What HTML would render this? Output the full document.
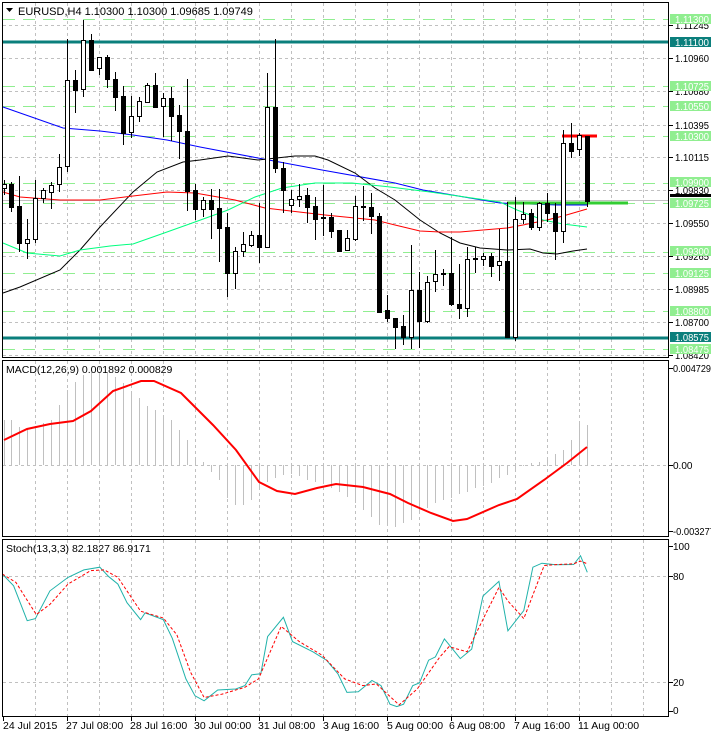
<!DOCTYPE html>
<html><head><meta charset="utf-8"><style>
html,body{margin:0;padding:0;background:#fff;}
svg{display:block;font-family:"Liberation Sans",sans-serif;}
</style></head><body>
<svg width="711" height="733" viewBox="0 0 711 733" xmlns="http://www.w3.org/2000/svg">
<rect width="711" height="733" fill="#fff"/>
<g stroke="#c0c0c0" stroke-width="1" stroke-dasharray="3,3">
<path d="M35.5 3V357M67.5 3V357M99.5 3V357M131.5 3V357M163.5 3V357M195.5 3V357M227.5 3V357M259.5 3V357M291.5 3V357M323.5 3V357M355.5 3V357M387.5 3V357M419.5 3V357M451.5 3V357M483.5 3V357M515.5 3V357M547.5 3V357M579.5 3V357M611.5 3V357M643.5 3V357"/>
<path d="M35.5 361V536M67.5 361V536M99.5 361V536M131.5 361V536M163.5 361V536M195.5 361V536M227.5 361V536M259.5 361V536M291.5 361V536M323.5 361V536M355.5 361V536M387.5 361V536M419.5 361V536M451.5 361V536M483.5 361V536M515.5 361V536M547.5 361V536M579.5 361V536M611.5 361V536M643.5 361V536"/>
<path d="M35.5 540V716M67.5 540V716M99.5 540V716M131.5 540V716M163.5 540V716M195.5 540V716M227.5 540V716M259.5 540V716M291.5 540V716M323.5 540V716M355.5 540V716M387.5 540V716M419.5 540V716M451.5 540V716M483.5 540V716M515.5 540V716M547.5 540V716M579.5 540V716M611.5 540V716M643.5 540V716"/>
<path d="M3 25.5H668M3 58.5H668M3 91.5H668M3 125.5H668M3 157.5H668M3 190.5H668M3 223.5H668M3 256.5H668M3 289.5H668M3 322.5H668M3 355.5H668"/>
<path d="M3 465.5H668M3 576.5H668M3 682.5H668"/>
</g>
<g stroke="#90ee90" stroke-width="1" stroke-dasharray="12,8">
<path d="M3 19.5H668M3 86.5H668M3 106.5H668M3 136.5H668M3 183.5H668M3 203.5H668M3 252.5H668M3 273.5H668M3 311.5H668M3 349.5H668"/>
</g>
<line x1="3" y1="200.5" x2="668" y2="200.5" stroke="#c0c0c0"/>
<g stroke="#0b7f7c" stroke-width="3"><line x1="3" y1="42" x2="668" y2="42"/><line x1="3" y1="338" x2="668" y2="338"/></g>
<g fill="none" stroke-width="1">
<polyline stroke="#0000ff" points="3,107 63,128 100,131 133,135 167,140 200,147 258,158 322,170 395,183 423,190 470,198 500,203 557,205 587,205"/>
<polyline stroke="#000" points="3,293 20,287 60,270 80,250 100,227 133,192 157,172 183,162 200,160 228,156 258,160 295,156 315,156 328,160 355,173 375,188 395,200 420,220 440,233 460,243 480,248 507,250 530,249 543,253 557,254 573,251 587,249"/>
<polyline stroke="#ff0000" points="3,192 20,197 60,200 100,200 133,196 167,192 195,193 235,200 265,208 325,215 375,220 395,225 420,231 440,232 460,232 483,230 507,228 523,225 547,220 563,216 587,209"/>
<polyline stroke="#00ff7f" points="3,243 27,253 60,256 80,250 110,246 133,244 167,232 195,222 228,210 255,197 282,188 315,183 352,183 390,187 430,192 500,202 517,210 543,220 563,224 587,227"/>
</g>
<line x1="562" y1="136" x2="597" y2="136" stroke="#ff0000" stroke-width="3"/>
<line x1="507" y1="203" x2="628" y2="203" stroke="#32cd32" stroke-width="3"/>
<g stroke="#000" stroke-width="1">
<path d="M4.5 180V195M11.5 182V212M19.5 176V252M27.5 219V259M35.5 180V243M43.5 188V203M51.5 182V209M59.5 154V192M67.5 39V172M75.5 70V113M83.5 20V97M91.5 34V71M99.5 57V75M107.5 55V88M115.5 72V111M123.5 86V145M131.5 96V138M139.5 97V122M147.5 83V103M155.5 73V107M163.5 93V137M171.5 87V141M179.5 105V159M187.5 79V211M195.5 184V220M203.5 197V217M211.5 189V239M219.5 189V262M227.5 213V297M235.5 247V289M243.5 232V257M251.5 231V247M259.5 203V263M267.5 73V247M275.5 39V173M283.5 162V213M291.5 190V213M299.5 184V207M307.5 188V223M315.5 197V240M323.5 185V236M331.5 213V238M339.5 230V251M347.5 230V250M355.5 196V241M363.5 186V221M371.5 193V234M379.5 213V313M387.5 295V322M395.5 318V349M403.5 315V345M411.5 245V349M419.5 272V348M427.5 276V323M435.5 250V292M443.5 269V286M451.5 237V306M459.5 264V319M467.5 247V317M475.5 247V273M483.5 253V266M491.5 253V277M499.5 229V281M507.5 202V337M515.5 197V341M523.5 202V224M531.5 209V230M539.5 202V231M547.5 193V222M555.5 203V260M563.5 130V243M571.5 123V158M579.5 133V156M587.5 136V207"/>
<g fill="#fff">
<rect x="2.5" y="184.5" width="4" height="4"/><rect x="25.5" y="239.5" width="4" height="4"/><rect x="33.5" y="198.5" width="4" height="41"/><rect x="41.5" y="190.5" width="4" height="8"/><rect x="49.5" y="185.5" width="4" height="7"/><rect x="57.5" y="167.5" width="4" height="17"/><rect x="65.5" y="80.5" width="4" height="86"/><rect x="81.5" y="40.5" width="4" height="49"/><rect x="97.5" y="57.5" width="4" height="11"/><rect x="129.5" y="116.5" width="4" height="16"/><rect x="137.5" y="101.5" width="4" height="15"/><rect x="145.5" y="85.5" width="4" height="17"/><rect x="161.5" y="98.5" width="4" height="8"/><rect x="201.5" y="200.5" width="4" height="9"/><rect x="233.5" y="251.5" width="4" height="22"/><rect x="241.5" y="244.5" width="4" height="7"/><rect x="249.5" y="235.5" width="4" height="10"/><rect x="265.5" y="107.5" width="4" height="140"/><rect x="289.5" y="199.5" width="4" height="6"/><rect x="297.5" y="196.5" width="4" height="3"/><rect x="345.5" y="238.5" width="4" height="12"/><rect x="353.5" y="206.5" width="4" height="33"/><rect x="409.5" y="290.5" width="4" height="47"/><rect x="425.5" y="282.5" width="4" height="39"/><rect x="433.5" y="274.5" width="4" height="7"/><rect x="465.5" y="259.5" width="4" height="49"/><rect x="481.5" y="256.5" width="4" height="3"/><rect x="497.5" y="261.5" width="4" height="4"/><rect x="513.5" y="219.5" width="4" height="118"/><rect x="521.5" y="214.5" width="4" height="5"/><rect x="537.5" y="203.5" width="4" height="24"/><rect x="561.5" y="143.5" width="4" height="88"/><rect x="577.5" y="135.5" width="4" height="14"/>
</g>
<g fill="#000">
<rect x="9.5" y="184.5" width="4" height="23"/><rect x="17.5" y="206.5" width="4" height="37"/><rect x="73.5" y="80.5" width="4" height="10"/><rect x="89.5" y="40.5" width="4" height="30"/><rect x="105.5" y="57.5" width="4" height="22"/><rect x="113.5" y="79.5" width="4" height="18"/><rect x="121.5" y="96.5" width="4" height="37"/><rect x="153.5" y="85.5" width="4" height="22"/><rect x="169.5" y="98.5" width="4" height="18"/><rect x="177.5" y="115.5" width="4" height="16"/><rect x="185.5" y="131.5" width="4" height="60"/><rect x="193.5" y="190.5" width="4" height="19"/><rect x="209.5" y="200.5" width="4" height="9"/><rect x="217.5" y="208.5" width="4" height="20"/><rect x="225.5" y="227.5" width="4" height="46"/><rect x="257.5" y="235.5" width="4" height="12"/><rect x="273.5" y="107.5" width="4" height="61"/><rect x="281.5" y="168.5" width="4" height="22"/><rect x="305.5" y="195.5" width="4" height="12"/><rect x="313.5" y="206.5" width="4" height="13"/><rect x="321.5" y="217.5" width="4" height="1"/><rect x="329.5" y="217.5" width="4" height="14"/><rect x="337.5" y="230.5" width="4" height="21"/><rect x="361.5" y="206.5" width="4" height="1"/><rect x="369.5" y="207.5" width="4" height="9"/><rect x="377.5" y="216.5" width="4" height="96"/><rect x="385.5" y="310.5" width="4" height="8"/><rect x="393.5" y="318.5" width="4" height="9"/><rect x="401.5" y="326.5" width="4" height="11"/><rect x="417.5" y="290.5" width="4" height="31"/><rect x="441.5" y="273.5" width="4" height="1"/><rect x="449.5" y="273.5" width="4" height="31"/><rect x="457.5" y="304.5" width="4" height="4"/><rect x="473.5" y="258.5" width="4" height="1"/><rect x="489.5" y="256.5" width="4" height="10"/><rect x="505.5" y="261.5" width="4" height="76"/><rect x="529.5" y="213.5" width="4" height="14"/><rect x="545.5" y="203.5" width="4" height="10"/><rect x="553.5" y="213.5" width="4" height="18"/><rect x="569.5" y="143.5" width="4" height="8"/><rect x="585.5" y="136.5" width="4" height="65"/>
</g>
</g>
<path stroke="#c0c0c0" stroke-width="1" fill="none" d="M4.5 465V420M11.5 465V420M19.5 465V427M27.5 465V428M35.5 465V426M43.5 465V423M51.5 465V420M59.5 465V405M67.5 465V390M75.5 465V382M83.5 465V375M91.5 465V372M99.5 465V372M107.5 465V373M115.5 465V377M123.5 465V383M131.5 465V392M139.5 465V398M147.5 465V406M155.5 465V410M163.5 465V415M171.5 465V420M179.5 465V430M187.5 465V440M195.5 465V457M203.5 465V462M211.5 465V472M219.5 465V480M227.5 465V498M235.5 465V505M243.5 465V505M251.5 465V500M259.5 465V490M267.5 465V482M275.5 465V478M283.5 465V475M291.5 465V474M299.5 465V476M307.5 465V480M315.5 465V482M323.5 465V484M331.5 465V488M339.5 465V492M347.5 465V497M355.5 465V503M363.5 465V510M371.5 465V517M379.5 465V525M387.5 465V525M395.5 465V527M403.5 465V523M411.5 465V520M419.5 465V513M427.5 465V508M435.5 465V503M443.5 465V500M451.5 465V498M459.5 465V494M467.5 465V492M475.5 465V488M483.5 465V486M491.5 465V483M499.5 465V478M507.5 465V475M515.5 465V470M523.5 465V466M531.5 465V463M539.5 465V462M547.5 465V458M555.5 465V454M563.5 465V450M571.5 465V440M579.5 465V424M587.5 465V425"/>
<polyline fill="none" stroke="#ff0000" stroke-width="2" points="4,440 27,429 50,424 73,421 91,411 113,391 141,381 154,381 181,393 213,425 236,450 259,482 277,491 295,494 317,488 336,484 363,487 390,494 408,503 431,513 453,521 467,519 499,505 517,499 544,480 567,463 587,447"/>
<polyline fill="none" stroke="#20b2aa" stroke-width="1" points="2.3,574 13.6,585.8 27.2,620.7 35.4,618.6 49.9,590.9 68,577.4 83.9,569.9 99.8,567.2 108.8,576.7 117.9,584.1 127,602.7 140.6,619.6 145.1,612.9 163.3,619.6 172.3,638.3 185.9,678.9 195,695.8 204.1,700.8 217.7,690 235.8,689 244.9,685.6 251.7,674.8 260.8,673.8 267.6,636.6 283.4,617.3 292.5,641.6 312.9,651.8 326.5,660.2 337.9,673.8 346.9,692.4 358.3,691.7 371.9,680.5 381,685.6 390,704.2 396.8,706.6 403.6,704.2 412.7,685.6 419.5,682.9 428.6,660.2 435.4,656.9 444.4,638.9 460.3,658.6 471.7,649.1 483,596 498.9,581.4 507.9,630.8 523.8,610.5 532.9,567.2 541.9,563.2 555.6,564.8 573.7,564.5 580.5,555.7 587.3,572.3"/>
<polyline fill="none" stroke="#ff0000" stroke-width="1" stroke-dasharray="3,2" points="2.3,574 15.9,582.4 36.3,614.6 49.9,604.4 68,584.1 90.7,570.6 104.3,569.9 117.9,577.4 140.6,611.2 163.3,618 176.9,634.9 190.5,672.1 204.1,697.5 222.2,694.1 244.9,687.3 258.5,678.9 281.2,626.4 299.3,641.6 322,655.2 344.7,678.9 362.8,685.6 376.4,683.9 399.1,704.9 417.2,689 439.9,656.9 449,646.7 467.1,651.8 485.3,614.6 498.9,587.5 507.9,601 523.8,618.6 544.2,565.5 557.8,564.5 573.7,563.8 580.5,561.1 587.3,563.8"/>
<g fill="none" stroke="#000" stroke-width="1">
<rect x="2.5" y="2.5" width="666" height="355"/>
<rect x="2.5" y="360.5" width="666" height="176"/>
<rect x="2.5" y="539.5" width="666" height="177"/>
</g>
<path stroke="#000" d="M669 25.5h4M669 58.5h4M669 91.5h4M669 125.5h4M669 157.5h4M669 190.5h4M669 223.5h4M669 256.5h4M669 289.5h4M669 322.5h4M669 355.5h4M669 368.5h4M669 465.5h4M669 531.5h4M669 546.5h4M669 576.5h4M669 682.5h4M669 711.5h4M3.5 717v4M67.5 717v4M131.5 717v4M195.5 717v4M259.5 717v4M323.5 717v4M387.5 717v4M451.5 717v4M515.5 717v4M579.5 717v4"/>
<g font-size="10" fill="#000" lengthAdjust="spacingAndGlyphs">
<text x="675" y="29" textLength="34" lengthAdjust="spacingAndGlyphs">1.11245</text><text x="675" y="62" textLength="34" lengthAdjust="spacingAndGlyphs">1.10960</text><text x="675" y="95" textLength="34" lengthAdjust="spacingAndGlyphs">1.10680</text><text x="675" y="129" textLength="34" lengthAdjust="spacingAndGlyphs">1.10395</text><text x="675" y="161" textLength="34" lengthAdjust="spacingAndGlyphs">1.10115</text><text x="675" y="194" textLength="34" lengthAdjust="spacingAndGlyphs">1.09830</text><text x="675" y="227" textLength="34" lengthAdjust="spacingAndGlyphs">1.09550</text><text x="675" y="260" textLength="34" lengthAdjust="spacingAndGlyphs">1.09265</text><text x="675" y="293" textLength="34" lengthAdjust="spacingAndGlyphs">1.08985</text><text x="675" y="326" textLength="34" lengthAdjust="spacingAndGlyphs">1.08700</text><text x="675" y="359" textLength="34" lengthAdjust="spacingAndGlyphs">1.08420</text>
<text x="673" y="372" textLength="38" lengthAdjust="spacingAndGlyphs">0.004729</text><text x="673" y="469">0.00</text><text x="673" y="535" textLength="42" lengthAdjust="spacingAndGlyphs">-0.003277</text>
<text x="673" y="550">100</text><text x="673" y="580">80</text><text x="673" y="686">20</text><text x="673" y="714">0</text>
</g>
<rect x="670" y="194" width="41" height="3" fill="#000"/>
<g fill="#90ee90">
<rect x="670" y="14" width="41" height="10"/><rect x="670" y="81" width="41" height="10"/><rect x="670" y="101" width="41" height="10"/><rect x="670" y="131" width="41" height="10"/><rect x="670" y="177" width="41" height="10"/><rect x="670" y="198" width="41" height="10"/><rect x="670" y="246" width="41" height="10"/><rect x="670" y="268" width="41" height="10"/><rect x="670" y="306" width="41" height="10"/><rect x="670" y="344" width="41" height="10"/>
</g>
<g fill="#0b7f7c"><rect x="670" y="37" width="41" height="10"/><rect x="670" y="332" width="41" height="10"/></g>
<g font-size="10" fill="#fff">
<text x="675" y="23" textLength="34" lengthAdjust="spacingAndGlyphs">1.11300</text><text x="675" y="46" textLength="34" lengthAdjust="spacingAndGlyphs">1.11100</text><text x="675" y="90" textLength="34" lengthAdjust="spacingAndGlyphs">1.10725</text><text x="675" y="110" textLength="34" lengthAdjust="spacingAndGlyphs">1.10550</text><text x="675" y="140" textLength="34" lengthAdjust="spacingAndGlyphs">1.10300</text><text x="675" y="186" textLength="34" lengthAdjust="spacingAndGlyphs">1.09900</text><text x="675" y="207" textLength="34" lengthAdjust="spacingAndGlyphs">1.09725</text><text x="675" y="255" textLength="34" lengthAdjust="spacingAndGlyphs">1.09300</text><text x="675" y="277" textLength="34" lengthAdjust="spacingAndGlyphs">1.09125</text><text x="675" y="315" textLength="34" lengthAdjust="spacingAndGlyphs">1.08800</text><text x="675" y="341" textLength="34" lengthAdjust="spacingAndGlyphs">1.08575</text><text x="675" y="353" textLength="34" lengthAdjust="spacingAndGlyphs">1.08475</text>
</g>
<path d="M6 8h7l-3.5 4z" fill="#000"/>
<text x="18" y="15" font-size="11" fill="#000">EURUSD,H4  1.10300 1.10300 1.09685 1.09749</text>
<text x="6" y="373" font-size="10.5" fill="#000">MACD(12,26,9) 0.001892 0.000829</text>
<text x="6" y="552" font-size="10.5" fill="#000">Stoch(13,3,3) 82.1827 86.9171</text>
<g font-size="10.5" fill="#000">
<text x="3" y="729">24 Jul 2015</text><text x="66" y="729">27 Jul 08:00</text><text x="130" y="729">28 Jul 16:00</text><text x="194" y="729">30 Jul 00:00</text><text x="258" y="729">31 Jul 08:00</text><text x="323" y="729">3 Aug 16:00</text><text x="387" y="729">5 Aug 00:00</text><text x="449" y="729">6 Aug 08:00</text><text x="514" y="729">7 Aug 16:00</text><text x="578" y="729">11 Aug 00:00</text>
</g>
</svg>
</body></html>
